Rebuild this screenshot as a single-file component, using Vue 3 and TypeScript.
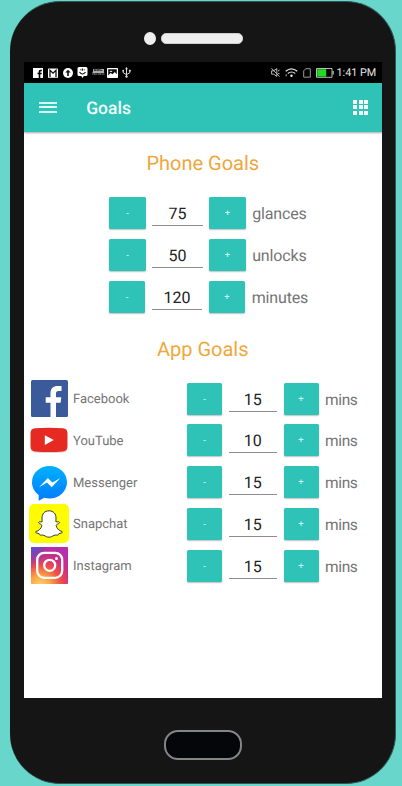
<script setup lang="ts">
import { reactive } from 'vue'

interface Goal {
  name: string
  value: number
  unit: string
}

const phoneGoals = reactive<Goal[]>([
  { name: 'glances', value: 75, unit: 'glances' },
  { name: 'unlocks', value: 50, unit: 'unlocks' },
  { name: 'minutes', value: 120, unit: 'minutes' },
])

const appGoals = reactive<Goal[]>([
  { name: 'Facebook', value: 15, unit: 'mins' },
  { name: 'YouTube', value: 10, unit: 'mins' },
  { name: 'Messenger', value: 15, unit: 'mins' },
  { name: 'Snapchat', value: 15, unit: 'mins' },
  { name: 'Instagram', value: 15, unit: 'mins' },
])

function change(goal: Goal, step: number): void {
  goal.value = Math.max(0, goal.value + step)
}
</script>

<template>
  <div class="page">
    <div class="phone">
      <div class="top-bezel">
        <span class="camera"></span>
        <span class="speaker"></span>
      </div>

      <main class="screen">
        <div class="status-bar">
          <div class="notifications">
            <svg viewBox="0 0 10 10" width="10" height="10">
              <path fill="#fff" fill-rule="evenodd" d="M0 0h10v10H7.300V6.300h1.300l.2-1.500H7.300V3.900c0-.5.2-.7.700-.7h.9V1.800H7.500C6.300 1.800 5.700 2.500 5.700 3.600v1.200H4.500v1.500h1.200V10H0z" />
            </svg>
            <svg viewBox="0 0 10 10" width="10" height="10">
              <rect y=".4" width="10" height="9.400" rx=".6" fill="#fff" />
              <path d="M2 9V2.200l3 2.900 3-2.900V9" fill="none" stroke="#111" stroke-width="1.300" />
            </svg>
            <svg viewBox="0 0 10 10" width="10" height="10">
              <circle cx="5" cy="5" r="5" fill="#fff" />
              <path d="M5 1.700 7.700 4.600H5.800V8H4.200V4.600H2.300z" fill="#111" />
            </svg>
            <svg viewBox="0 0 10 11" width="11" height="11">
              <path d="M1.500 0h7Q10 0 10 1.500v6Q10 9 8.500 9H6.300L5 11 3.700 9H1.500Q0 9 0 7.500v-6Q0 0 1.500 0z" fill="#fff" />
              <path d="M2 5.200q3 3.600 6 0M2.800 2.800h1M4.900 1.600v2.200M6.200 2.800h1" fill="none" stroke="#111" stroke-width="1.100" />
            </svg>
            <span class="news"><b>BBC</b><i>NEWS</i></span>
            <svg class="photo" viewBox="0 0 11 10" width="11" height="10">
              <rect width="11" height="10" rx=".7" fill="#fff" />
              <path d="M1.200 1.200h8.600v5L7.700 4 5.600 6.300 3.500 5 1.200 7.400z" fill="#111" />
              <path d="M2.400 3.800 4 2.600 5.500 4z" fill="#fff" />
            </svg>
            <svg class="usb" viewBox="0 0 9 11" width="9" height="11">
              <path d="M4.500 1.500V9M1.200 3.500v2.200l3.300 2 3.300-2V3.500" fill="none" stroke="#ddd" stroke-width="1" />
              <path d="M4.500 0 6 2.200H3z" fill="#ddd" />
              <circle cx="4.500" cy="9.600" r="1.200" fill="#ddd" />
              <circle cx="1.200" cy="3.700" r=".9" fill="#ddd" />
              <path d="M6.900 2.800h1.800v1.800H6.900z" fill="#ddd" />
            </svg>
          </div>
          <div class="system">
            <svg class="mute" viewBox="0 0 9 9" width="9" height="9">
              <path d="M.6 2.800h2L5.800.6v7.800L2.600 6.100h-2zM.5.3l8 8.300M7 3.100 8.600 2M7 5.300l1.600.5" fill="none" stroke="#ccc" stroke-width=".9" />
            </svg>
            <svg class="wifi" viewBox="0 0 13 9" width="13" height="9">
              <path d="M.7 3.300q5.800-5 11.600 0M2.800 5.500q3.700-3 7.400 0" fill="none" stroke="#e2e2e2" stroke-width="1.200" />
              <circle cx="6.500" cy="7.700" r="1.200" fill="#eee" />
              <path d="M.6 6.300h1.200v2H.6z" fill="#999" />
            </svg>
            <svg class="sim" viewBox="0 0 8 10" width="8" height="10">
              <path d="M2.700.7h4.600v8.500H.7V2.900z" fill="none" stroke="#aaa" stroke-width=".9" />
            </svg>
            <svg class="battery" viewBox="0 0 18 10" width="18" height="10">
              <path d="M.5.500h15.500v8.800H.5z" fill="#000" stroke="#bbb" />
              <path d="M1.200 1.200h9v7.400h-9z" fill="#20dc20" />
              <path d="M16.500 3h1.200v3.600h-1.200z" fill="#ccc" />
            </svg>
            <span class="clock">1:41 PM</span>
          </div>
        </div>

        <header class="app-bar">
          <span class="menu"><i></i><i></i><i></i></span>
          <h1>Goals</h1>
          <span class="apps"><i v-for="n in 9" :key="n"></i></span>
        </header>

        <section class="phone-goals">
          <h2>Phone Goals</h2>
          <div class="rows">
            <div v-for="goal in phoneGoals" :key="goal.name" class="row">
              <button type="button" @click="change(goal, -1)">-</button>
              <span class="value">{{ goal.value }}</span>
              <button type="button" @click="change(goal, 1)">+</button>
              <span class="unit">{{ goal.unit }}</span>
            </div>
          </div>
        </section>

        <section class="app-goals">
          <h2>App Goals</h2>
          <div class="rows">
            <div v-for="goal in appGoals" :key="goal.name" class="row">
              <span class="logo">
                <svg v-if="goal.name === 'Facebook'" viewBox="0 0 37 37" width="37" height="37">
                  <rect width="37" height="37" rx="1.500" fill="#3b5a9a" />
                  <path fill="#fff" d="M19.500 37V22.700h-4.800v-5.500h4.800v-4.100c0-4.800 2.900-7.200 7.100-7.200 1.800 0 3.200.1 3.900.2v4.900h-2.800c-2.200 0-2.700 1.100-2.700 2.700v3.500h5.300l-.7 5.500H25V37z" />
                </svg>
                <svg v-else-if="goal.name === 'YouTube'" class="youtube" viewBox="0 0 38 27" width="38" height="27">
                  <path fill="#dcd6d6" d="M5 2Q19 .6 33 2q4.500.3 4.500 4.500v14q0 4.500-4.500 5-14 1-28 0-4.500-.5-4.500-5v-14Q.5 2.300 5 2z" />
                  <path fill="#e62a22" d="M5 1.300q14-1.200 28 0 4.300.3 4.400 4.500v14q-.1 4.300-4.400 4.700-14 1-28 0-4.300-.4-4.400-4.700v-14Q.7 1.600 5 1.300z" />
                  <path fill="#fff" d="m14.800 8.200 9 4.900-9 4.900z" />
                </svg>
                <svg v-else-if="goal.name === 'Messenger'" class="messenger" viewBox="0 0 35 35" width="35" height="35">
                  <defs>
                    <linearGradient id="messenger-fill" x1="0" y1="0" x2="0" y2="1">
                      <stop offset="0" stop-color="#00b2ff" />
                      <stop offset="1" stop-color="#007aff" />
                    </linearGradient>
                  </defs>
                  <path fill="url(#messenger-fill)" d="M17.500 0C27.300 0 35 7.200 35 16.200s-7.700 16.300-17.500 16.300c-1.900 0-3.700-.2-5.300-.8L6.700 34.800V29C2.600 26 0 21.500 0 16.200 0 7.200 7.700 0 17.500 0z" />
                  <path fill="#fff" d="m7 21.200 8.900-9.300 4.500 4.500 7.900-4.500-8.600 9.400-4.700-4.700z" />
                </svg>
                <svg v-else-if="goal.name === 'Snapchat'" viewBox="0 0 40 39" width="40" height="39">
                  <rect width="40" height="39" rx="5" fill="#fffc00" />
                  <path fill="#fff" stroke="#3a3a2c" stroke-width="1" stroke-linejoin="round" d="M20 6.800c4.500 0 7 3.100 7 7.300l-.1 3.700c.9.400 1.900-.2 2.600-.1 1.200.3 1.100 1.400.1 1.900-1.500.7-2.400.9-2.400 2 .5 3 3.100 5.200 5.800 5.900.8.300.4 1.100-.4 1.400-1.100.5-2.200.5-2.700.7-.4.300-.1 1.400-.8 1.500-1.200.1-2.600-.4-4.100.3-1.600.8-2.900 1.800-5 1.800s-3.400-1-5-1.800c-1.500-.7-2.900-.2-4.100-.3-.7-.1-.4-1.200-.8-1.500-.5-.2-1.600-.2-2.700-.7-.8-.3-1.200-1.100-.4-1.400 2.700-.7 5.300-2.900 5.800-5.900 0-1.100-.9-1.300-2.400-2-1-.5-1.100-1.600.1-1.900.7-.1 1.700.5 2.600.1l-.1-3.700c0-4.200 2.500-7.300 7-7.300z" />
                </svg>
                <svg v-else viewBox="0 0 37 37" width="37" height="37">
                  <defs>
                    <radialGradient id="insta-warm" cx=".25" cy="1.050" r="1.100">
                      <stop offset="0" stop-color="#ffd46a" />
                      <stop offset=".25" stop-color="#fba747" />
                      <stop offset=".5" stop-color="#ef5146" />
                      <stop offset=".75" stop-color="#cf2e83" />
                      <stop offset="1" stop-color="#b32fae" />
                    </radialGradient>
                    <radialGradient id="insta-cool" cx="0" cy="0" r=".6">
                      <stop offset="0" stop-color="#5155cf" />
                      <stop offset=".4" stop-color="#7243c0" stop-opacity=".75" />
                      <stop offset="1" stop-color="#a935a5" stop-opacity="0" />
                    </radialGradient>
                  </defs>
                  <rect width="37" height="37" rx="1" fill="url(#insta-warm)" />
                  <rect width="37" height="37" rx="1" fill="url(#insta-cool)" />
                  <rect x="6.200" y="5.800" width="25" height="25" rx="7" fill="none" stroke="#fff" stroke-width="2.300" />
                  <circle cx="18.700" cy="18.300" r="5.500" fill="none" stroke="#fff" stroke-width="2.300" />
                  <circle cx="25.500" cy="11.500" r="1.500" fill="#fff" />
                </svg>
              </span>
              <span class="name">{{ goal.name }}</span>
              <button type="button" @click="change(goal, -1)">-</button>
              <span class="value">{{ goal.value }}</span>
              <button type="button" @click="change(goal, 1)">+</button>
              <span class="unit">{{ goal.unit }}</span>
            </div>
          </div>
        </section>
      </main>

      <div class="bottom-bezel">
        <span class="home"></span>
      </div>
    </div>
  </div>
</template>

<style>
body {
  background: #68d6cb;
}
</style>

<style scoped>
* {
  box-sizing: border-box;
}

svg {
  display: block;
  flex: none;
}

.page {
  width: 402px;
  height: 786px;
  padding: 1px 6px 2px 10px;
  overflow: hidden;
  background: #68d6cb;
  font-family: Roboto, "Liberation Sans", sans-serif;
  text-rendering: geometricPrecision;
}

.phone {
  display: flex;
  flex-direction: column;
  height: 783px;
  padding: 0 13.5px 0 14px;
  border: 1px solid #2f5854;
  border-width: 1px 1px 1px 0;
  border-radius: 50px;
  background: #151515;
}

.top-bezel {
  display: flex;
  align-items: center;
  gap: 5px;
  height: 60px;
  padding: 13px 0 0 120px;
}

.camera {
  width: 12px;
  height: 13px;
  border-radius: 50%;
  background: #eee;
}

.speaker {
  width: 82px;
  height: 11px;
  border: 1px solid #cfcdcd;
  border-radius: 5px;
  background: #efeeee;
}

.screen {
  height: 636px;
  background: #fff;
}

.status-bar {
  display: flex;
  align-items: center;
  justify-content: space-between;
  height: 21px;
  padding: 0 5px 0 9px;
  background: #000;
}

.notifications {
  display: flex;
  align-items: center;
  gap: 4.800px;
}

.photo {
  margin-left: -2px;
}

.usb {
  margin-left: -1px;
}

.news {
  display: flex;
  flex-direction: column;
  align-items: center;
  width: 12px;
  margin-left: -1px;
  color: #aaa;
  font-size: 4.500px;
  line-height: 4px;
}

.news b {
  width: 11px;
  background: #aaa;
  color: #111;
  text-align: center;
}

.news i {
  font-style: normal;
}

.system {
  display: flex;
  align-items: center;
}

.wifi {
  margin-left: 5px;
}

.sim {
  margin-left: 5px;
}

.battery {
  margin-left: 5px;
}

.clock {
  width: 40px;
  margin-left: 2.500px;
  color: #e4e4e4;
  font-size: 10.800px;
  line-height: 14px;
  white-space: nowrap;
}

.app-bar {
  display: flex;
  align-items: center;
  height: 48.500px;
  padding: 0 13.500px 0 15px;
  background: #2fc3b7;
  box-shadow: 0 1px 2px rgba(0, 0, 0, 0.35);
}

.menu {
  display: grid;
  gap: 2.500px;
  width: 18px;
}

.menu i {
  height: 2px;
  background: #d9fffa;
}

h1 {
  flex: 1;
  margin: 3px 0 0 29.200px;
  color: #f2fffd;
  font-size: 17.500px;
  font-weight: 500;
  line-height: 24px;
}

.apps {
  display: grid;
  grid-template-columns: repeat(3, 4px);
  gap: 1.300px;
}

.apps i {
  height: 4px;
  background: #f4fffe;
}

h2 {
  margin: 0 0 22px;
  color: #f0a73c;
  font-size: 20px;
  font-weight: 400;
  line-height: 24px;
  text-align: center;
}

.phone-goals {
  padding-top: 19.500px;
}

.app-goals {
  padding-top: 24px;
}

.rows {
  display: grid;
  gap: 9.800px;
}

.row {
  display: grid;
  grid-template-rows: 32px;
  align-items: center;
}

.phone-goals .row {
  grid-template-columns: 36.500px 50.700px 36.500px auto;
  column-gap: 6.400px;
  padding-left: 85.300px;
}

.phone-goals .row:last-child {
  padding-left: 84.800px;
}

.app-goals .row {
  grid-template-columns: 40px 118px 35px 61.500px 35px auto;
  padding-left: 5px;
}

button {
  height: 32px;
  padding: 0;
  border: 0;
  border-radius: 1.500px;
  background: #2fc3b7;
  box-shadow: 0 1px 1.500px rgba(0, 0, 0, 0.25);
  color: #d4fff8;
  font-family: inherit;
  font-size: 9.500px;
  line-height: 32px;
}

.value {
  height: 25px;
  margin-top: 1px;
  border-bottom: 1px solid #8d8d8d;
  color: #222;
  font-size: 16px;
  line-height: 25px;
  text-align: center;
}

.app-goals .value {
  width: 48.500px;
  margin-right: 6.500px;
  margin-left: 6.500px;
}

.unit {
  margin-top: 2px;
  color: #757575;
  font-size: 16px;
  letter-spacing: -0.150px;
  line-height: 24px;
}

.app-goals .unit {
  margin-left: 6.500px;
  font-size: 15.500px;
  letter-spacing: -0.350px;
}

.logo {
  display: flex;
  align-items: center;
  justify-content: center;
  height: 32px;
  margin-top: -1px;
}

.youtube {
  margin-top: 1.500px;
}

.messenger {
  margin-top: 3px;
}

.name {
  margin-top: 3px;
  padding-left: 4px;
  color: #757575;
  font-size: 13px;
  line-height: 20px;
}

.bottom-bezel {
  display: flex;
  justify-content: center;
  padding-top: 32px;
}

.home {
  width: 78px;
  height: 30px;
  border: 2px solid #858585;
  border-radius: 14px;
  background: #040609;
}
</style>
